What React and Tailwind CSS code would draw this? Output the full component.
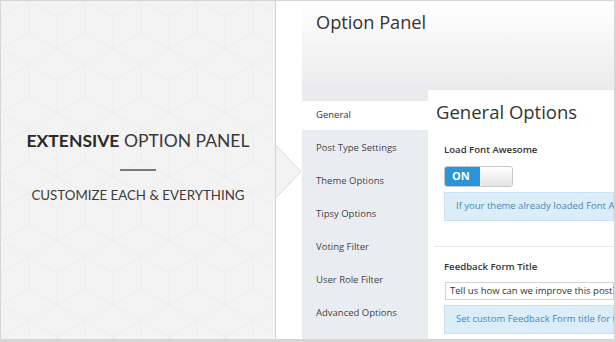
import React from "react";

const lato = { fontFamily: "Lato, 'Open Sans', sans-serif" };
const open = { fontFamily: "'Open Sans', 'Noto Sans', sans-serif" };

function CubePattern() {
  return (
    <svg className="absolute inset-0 h-full w-full" xmlns="http://www.w3.org/2000/svg">
      <defs>
        <pattern id="cubes" width="56" height="64" patternUnits="userSpaceOnUse">
          <path
            d="M28 0 L56 16 L56 48 L28 64 L0 48 L0 16 Z M28 0 L28 32 M0 48 L28 32 L56 48"
            fill="none"
            stroke="#ededed"
            strokeWidth="1"
          />
        </pattern>
      </defs>
      <rect width="100%" height="100%" fill="url(#cubes)" />
    </svg>
  );
}

const sideItems = [
  "Post Type Settings",
  "Theme Options",
  "Tipsy Options",
  "Voting Filter",
  "User Role Filter",
  "Advanced Options",
];

export default function App() {
  return (
    <div className="relative flex h-[342px] w-[616px] overflow-hidden border-t border-l border-r-2 border-b-[3px] border-[#d6d6d6] bg-white">
      {/* Left promo panel */}
      <div className="relative flex h-full w-[275px] shrink-0 flex-col items-center border-r border-[#d4d4d4] bg-[#f3f3f3]">
        <CubePattern />
        <div className="relative flex flex-col items-center pt-[128px]" style={lato}>
          <div className="whitespace-nowrap text-[17.5px] leading-[24px] text-[#2a2a2a]">
            <span className="font-bold">EXTENSIVE</span>{" "}
            <span className="text-[#3a3a3a]">OPTION PANEL</span>
          </div>
          <div className="mt-[16px] h-[2px] w-[36px] bg-[#7a7a7a]" />
          <div className="mt-[15px] whitespace-nowrap text-[13.3px] leading-[18px] text-[#3c3c3c]">
            CUSTOMIZE EACH &amp; EVERYTHING
          </div>
        </div>
      </div>

      {/* Arrow */}
      <svg
        className="absolute left-[275px] top-[144px]"
        width="27"
        height="53"
        viewBox="0 0 27 53"
      >
        <polygon points="0,0 25,26.5 0,53" fill="#f3f3f3" />
        <polyline points="0,0.5 25,26.5 0,52.5" fill="none" stroke="#dadada" strokeWidth="1" />
      </svg>

      {/* White gap */}
      <div className="w-[26px] shrink-0" />

      {/* Option panel */}
      <div className="flex min-w-0 flex-1 flex-col" style={open}>
        <div className="h-[89px] shrink-0 bg-gradient-to-b from-[#ffffff] to-[#ebebed] pl-[14px] pt-[7px]">
          <div className="text-[18.2px] leading-[28px] text-[#333333]">Option Panel</div>
        </div>
        <div className="flex min-h-0 flex-1">
          {/* Sidebar */}
          <div className="flex w-[126px] shrink-0 flex-col bg-[#e9edf2]">
            <div className="h-[11px] bg-[#ebebed]" />
            <div className="flex h-[29px] items-center bg-white pl-[14px] text-[9.5px] text-[#333]">
              General
            </div>
            <div className="pt-[2px]">
              {sideItems.map((s) => (
                <div key={s} className="flex h-[33px] items-center pl-[14px] text-[9.5px] text-[#444]">
                  {s}
                </div>
              ))}
            </div>
          </div>

          {/* Content */}
          <div className="min-w-0 flex-1 overflow-hidden bg-white">
            <div className="pl-[8px] pt-[8px] text-[18.5px] leading-[28px] whitespace-nowrap text-[#333]">
              General Options
            </div>
            <div className="pl-[16px]">
              <div className="mt-[17px] text-[9.6px] font-semibold leading-[14px] text-[#333] whitespace-nowrap">
                Load Font Awesome
              </div>
              <div className="mt-[9px] flex h-[21px] w-[69px] overflow-hidden rounded-[3px] border border-[#c8c8c8]">
                <div className="flex w-[35px] items-center bg-[#2a96d8] pl-[7px] text-[11px] font-bold text-white">
                  ON
                </div>
                <div className="flex-1 rounded-[3px] bg-gradient-to-b from-[#ffffff] to-[#e4e4e4]" />
              </div>
              <div className="mt-[5px] flex h-[29px] items-center whitespace-nowrap border border-[#c8e2f1] bg-[#daedf8] pl-[11px] text-[9.5px] text-[#4a88b8]">
                If your theme already loaded Font Awesome, turn it off
              </div>
            </div>
            <div className="ml-[6px] mt-[25px] h-px bg-[#e6e6e6]" />
            <div className="pl-[16px]">
              <div className="mt-[13px] text-[9.6px] font-semibold leading-[14px] text-[#333] whitespace-nowrap">
                Feedback Form Title
              </div>
              <div className="ml-px mt-[8px] flex h-[18px] items-center whitespace-nowrap border border-[#d4d4d4] bg-white pl-[4px] text-[9.5px] text-[#333]">
                Tell us how can we improve this post?
              </div>
              <div className="mt-[5px] flex h-[29px] items-center whitespace-nowrap border border-[#c8e2f1] bg-[#daedf8] pl-[11px] text-[9.5px] text-[#4a88b8]">
                Set custom Feedback Form title for the widget
              </div>
            </div>
          </div>
        </div>
      </div>
    </div>
  );
}
